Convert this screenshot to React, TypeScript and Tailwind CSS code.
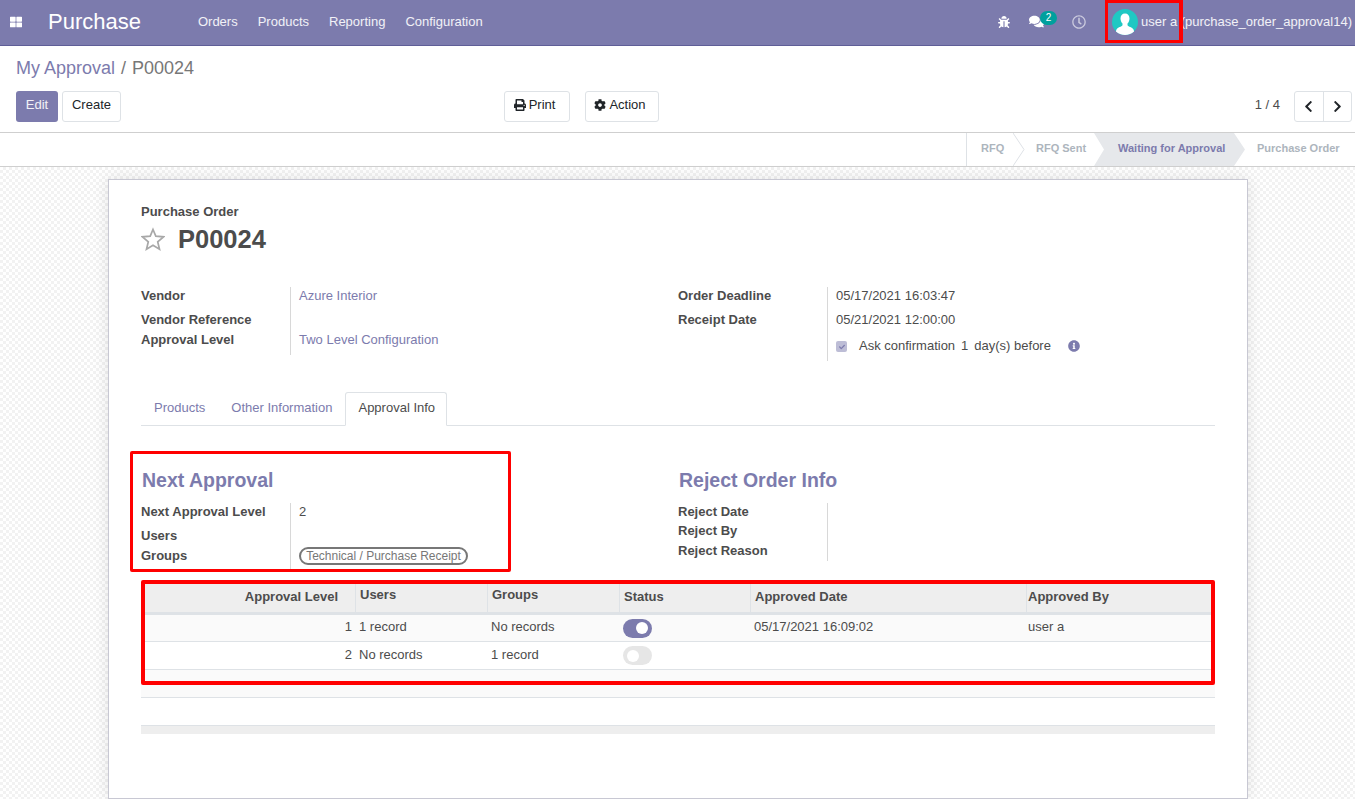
import React from "react";
import {
  FaThLarge,
  FaBug,
  FaComments,
  FaRegClock,
  FaPrint,
  FaCog,
  FaChevronLeft,
  FaChevronRight,
  FaInfoCircle,
  FaCheck,
} from "react-icons/fa";

function Toggle({ on }: { on: boolean }) {
  return (
    <span
      className={`flex h-[19px] w-[29px] items-center rounded-full px-[4px] ${
        on ? "justify-end bg-[#7c7bad]" : "justify-start bg-[#e6e6e6]"
      }`}
    >
      <span className="h-[12px] w-[12px] rounded-full bg-white" />
    </span>
  );
}

function Chevron() {
  return (
    <svg
      className="absolute right-[-11px] top-0 z-10 h-[33px] w-[12px]"
      viewBox="0 0 12 33"
      fill="none"
    >
      <path d="M0 0L11 16.5L0 33" stroke="#dee2e6" strokeWidth="1" fill="#fff" />
    </svg>
  );
}

function Field({
  label,
  children,
  className,
}: {
  label: string;
  children?: React.ReactNode;
  className?: string;
}) {
  return (
    <div className={`flex items-start pt-px leading-[16px] ${className}`}>
      <div className="w-[149px] font-bold">{label}</div>
      <div className="flex flex-1 items-start pl-[9px]">{children}</div>
    </div>
  );
}

function FieldGroup({ children }: { children: React.ReactNode }) {
  return (
    <div className="relative">
      <div className="absolute bottom-0 left-[149px] top-0 w-px bg-[#d8d8d8]" />
      {children}
    </div>
  );
}

const th = "h-full flex items-center border-r border-[#dee2e6] px-[4px] pb-[2px] font-bold";
const cols = "grid grid-cols-[215px_132px_132px_131px_276px_188px] items-center";

export default function App() {
  return (
    <div
      className="relative flex h-[799px] w-[1355px] flex-col overflow-hidden bg-white text-[13px] leading-[18px] text-[#4c4c4c]"
      style={{ fontFamily: '"Liberation Sans", Arial, sans-serif' }}
    >
      {/* top nav */}
      <header className="flex h-[46px] shrink-0 items-center border-b border-[#5f5e97] bg-[#7c7bad] pb-[2px] text-white">
        <FaThLarge className="ml-[10px] h-[12px] w-[12px]" />
        <span className="ml-[26px] text-[22px] leading-none">Purchase</span>
        <nav className="ml-[57px] flex gap-[20px] text-[13px] text-white/90">
          <span>Orders</span>
          <span>Products</span>
          <span>Reporting</span>
          <span>Configuration</span>
        </nav>
        <div className="ml-auto flex items-center pr-[3px]">
          <FaBug className="h-[12px] w-[12px]" />
          <div className="relative ml-[19px] flex items-center">
            <FaComments className="h-[15px] w-[15px]" />
            <span className="ml-[-4px] mt-[-7px] flex h-[14px] w-[17px] items-center justify-center rounded-full bg-[#00a09d] text-[10px] leading-none">
              2
            </span>
          </div>
          <FaRegClock className="ml-[15px] h-[14px] w-[14px] text-white/60" />
          <svg className="ml-[26px] h-[26px] w-[26px] rounded-full" viewBox="0 0 26 26">
            <rect width="26" height="26" fill="#1fc8c3" />
            <path
              d="M13 4.500c-2.900 0-4.500 2-4.500 5 0 2.200 1 4 2 5.100v1.600c-.8 1.500-4.800 2-6 4.300-.5 1-.6 2-.6 5.500h18.200c0-3.500-.1-4.500-.6-5.500-1.200-2.300-5.200-2.800-6-4.300v-1.600c1-1.100 2-2.900 2-5.100 0-3-1.600-5-4.500-5z"
              fill="#fff"
            />
          </svg>
          <span className="ml-[3px] text-[13px] text-white/90">
            user a (purchase_order_approval14)
          </span>
        </div>
      </header>

      {/* control panel */}
      <div className="h-[87px] shrink-0 border-b border-[#cfcfcf] px-[16px]">
        <div className="pt-[11px] text-[18px] leading-[22px]">
          <span className="text-[#7c7bad]">My Approval</span>
          <span className="ml-[6px] text-[#777]">/</span>
          <span className="ml-[6px] text-[#777]">P00024</span>
        </div>
        <div className="mt-[12px] flex items-center">
          <button className="h-[31px] w-[42px] rounded-[3px] bg-[#7c7bad] pb-[4px] text-white/90">
            Edit
          </button>
          <button className="ml-[4px] h-[31px] w-[59px] rounded-[3px] border border-[#dee2e6] pb-[4px] text-[#212529]">
            Create
          </button>
          <button className="ml-[383px] flex h-[31px] w-[66px] items-center justify-center gap-[3px] rounded-[3px] border border-[#dee2e6] pb-[4px] pr-[5px] text-[#212529]">
            <FaPrint className="h-[12px] w-[12px]" />
            Print
          </button>
          <button className="ml-[15px] flex h-[31px] w-[74px] items-center justify-center gap-[3px] rounded-[3px] border border-[#dee2e6] pb-[4px] pr-[4px] text-[#212529]">
            <FaCog className="h-[12px] w-[12px]" />
            Action
          </button>
          <span className="ml-auto pb-[4px] text-[#4c4c4c]">1 / 4</span>
          <div className="ml-[14px] mr-[-13px] flex h-[31px] w-[58px] rounded-[3px] border border-[#dee2e6] text-[#212529]">
            <span className="flex flex-1 items-center justify-center border-r border-[#dee2e6]">
              <FaChevronLeft className="h-[13px] w-[13px]" />
            </span>
            <span className="flex flex-1 items-center justify-center">
              <FaChevronRight className="h-[13px] w-[13px]" />
            </span>
          </div>
        </div>
      </div>

      {/* statusbar */}
      <div className="flex h-[34px] shrink-0 justify-end border-b border-[#cfcfcf] text-[11px] font-bold leading-[31px] text-[#adb5bd]">
        <div className="relative w-[48px] border-l border-[#dee2e6] pl-[14px]">
          RFQ
          <Chevron />
        </div>
        <div className="w-[80px] pl-[22px]">RFQ Sent</div>
        <div className="w-[151px] bg-[#e6e8eb] pl-[24px] text-[#7c7bad] [clip-path:polygon(0_0,calc(100%-11px)_0,100%_50%,calc(100%-11px)_100%,0_100%,10px_50%)]">
          Waiting for Approval
        </div>
        <div className="w-[110px] pl-[12px]">Purchase Order</div>
      </div>

      {/* sheet background */}
      <div className="flex-1 bg-[repeating-conic-gradient(#f2f2f2_0%_25%,#ffffff_0%_50%)] bg-[length:6px_6px] pl-[108px] pt-[12px]">
        <div className="h-[620px] w-[1140px] border border-[#c8c8d3] bg-white pl-[32px] pr-[32px] pt-[24px] shadow-[0_0_15px_rgba(0,0,0,0.1)]">
          <div className="font-bold leading-[16px]">Purchase Order</div>
          <div className="mt-[3px] flex h-[34px] items-center">
            <svg className="mt-[-2px] h-[24px] w-[24px]" viewBox="0 0 24 24" fill="none">
              <path
                d="M12 2.500L14.800 9.100L22.500 9.800L16.700 14.800L18.500 22.200L12 18.300L5.500 22.200L7.300 14.800L1.500 9.800L9.200 9.100Z"
                stroke="#a8a8a8"
                strokeWidth="1.700"
              />
            </svg>
            <h1 className="ml-[13px] text-[25.500px] font-bold leading-none">P00024</h1>
          </div>

          <div className="mt-[30px] flex">
            <div className="w-[537px]">
              <FieldGroup>
                <Field label="Vendor" className="h-[24px]">
                  <span className="text-[#7c7bad]">Azure Interior</span>
                </Field>
                <Field label="Vendor Reference" className="h-[20px]" />
                <Field label="Approval Level" className="h-[24px]">
                  <span className="text-[#7c7bad]">Two Level Configuration</span>
                </Field>
              </FieldGroup>
            </div>
            <div className="flex-1">
              <FieldGroup>
                <Field label="Order Deadline" className="h-[24px]">
                  05/17/2021 16:03:47
                </Field>
                <Field label="Receipt Date" className="h-[26px]">
                  05/21/2021 12:00:00
                </Field>
                <Field label="" className="h-[24px]">
                  <span className="mt-[3px] flex h-[11px] w-[11px] items-center justify-center rounded-[2px] bg-[#bdbdd6] text-[#7c7bad]">
                    <FaCheck className="h-[6px] w-[6px]" />
                  </span>
                  <span className="ml-[12px]">Ask confirmation</span>
                  <span className="ml-[6px]">1</span>
                  <span className="ml-[6px]">day(s) before</span>
                  <FaInfoCircle className="ml-[17px] mt-[2px] h-[12px] w-[12px] text-[#7c7bad]" />
                </Field>
              </FieldGroup>
            </div>
          </div>

          {/* tabs */}
          <div className="mt-[31px] flex h-[34px] border-b border-[#dee2e6] text-[#7c7bad]">
            <div className="flex h-[31px] items-center pl-[13px]">Products</div>
            <div className="ml-[13px] flex h-[31px] items-center px-[13px]">Other Information</div>
            <div className="flex h-[34px] w-[102px] items-center rounded-t-[3px] border border-b-white border-[#dee2e6] bg-white pb-[2px] pl-[12px] text-[#4c4c4c]">
              Approval Info
            </div>
          </div>

          <div className="mt-[42px] flex">
            <div className="w-[537px]">
              <h2 className="pl-px text-[19.500px] font-bold leading-[24px] text-[#7c7bad]">
                Next Approval
              </h2>
              <div className="mt-[11px]">
                <FieldGroup>
                  <Field label="Next Approval Level" className="h-[24px]">
                    2
                  </Field>
                  <Field label="Users" className="h-[20px]" />
                  <Field label="Groups" className="h-[24px]">
                    <span className="mt-[-1px] flex h-[18px] w-[169px] items-center justify-center rounded-full border-2 border-[#777] pb-[1px] text-[12px] leading-none text-[#777]">
                      Technical / Purchase Receipt
                    </span>
                  </Field>
                </FieldGroup>
              </div>
            </div>
            <div className="flex-1">
              <h2 className="pl-px text-[19.500px] font-bold leading-[24px] text-[#7c7bad]">
                Reject Order Info
              </h2>
              <div className="mt-[11px]">
                <FieldGroup>
                  <Field label="Reject Date" className="h-[19px]" />
                  <Field label="Reject By" className="h-[20px]" />
                  <Field label="Reject Reason" className="h-[19px]" />
                </FieldGroup>
              </div>
            </div>
          </div>

          {/* approval table */}
          <div className="mt-[13px]">
            <div className={`${cols} h-[31px] border-b-[3px] border-[#dee2e6] bg-[#eeeeee]`}>
              <div className={`${th} justify-end !pr-[17px]`}>Approval Level</div>
              <div className={`${th} !pb-[6px]`}>Users</div>
              <div className={`${th} !pb-[6px]`}>Groups</div>
              <div className={th}>Status</div>
              <div className={th}>Approved Date</div>
              <div className="flex h-full items-center pb-[2px] pl-px font-bold">Approved By</div>
            </div>
            <div className={`${cols} h-[27px] border-b border-[#dee2e6] bg-[#fafafa]`}>
              <div className="px-[4px] pb-[2px] text-right">1</div>
              <div className="px-[3px] pb-[2px]">1 record</div>
              <div className="px-[3px] pb-[2px]">No records</div>
              <div className="px-[3px]"><Toggle on /></div>
              <div className="px-[3px] pb-[2px]">05/17/2021 16:09:02</div>
              <div className="pb-[2px] pl-px">user a</div>
            </div>
            <div className={`${cols} h-[28px] border-b border-[#dee2e6]`}>
              <div className="px-[4px] pb-[2px] text-right">2</div>
              <div className="px-[3px] pb-[2px]">No records</div>
              <div className="px-[3px] pb-[2px]">1 record</div>
              <div className="px-[3px]"><Toggle on={false} /></div>
            </div>
            <div className="h-[28px] border-b border-[#dee2e6] bg-[#fafafa]" />
            <div className="h-[28px] border-b border-[#dee2e6]" />
            <div className="h-[8px] bg-[#eeeeee]" />
          </div>
        </div>
      </div>

      {/* red annotation boxes */}
      <div className="absolute left-[1105px] top-0 h-[43px] w-[78px] border-[3px] border-r-4 border-[#ff0000]" />
      <div className="absolute left-[130px] top-[451px] h-[121px] w-[381px] rounded-[2px] border-[3px] border-[#ff0000]" />
      <div className="absolute left-[141px] top-[580px] h-[105px] w-[1074px] rounded-[2px] border-4 border-[#ff0000]" />
    </div>
  );
}
